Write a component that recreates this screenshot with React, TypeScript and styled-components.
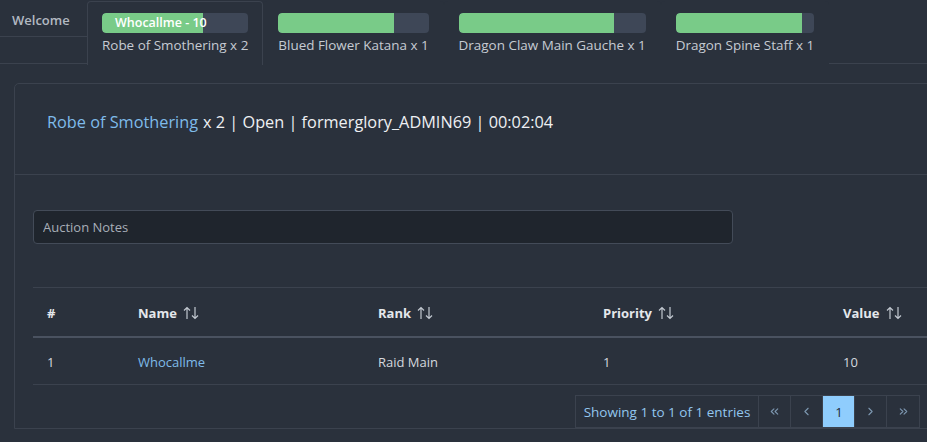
import React from "react";
import styled, { createGlobalStyle } from "styled-components";
import { ChevronsLeft, ChevronLeft, ChevronRight, ChevronsRight } from "lucide-react";

const Global = createGlobalStyle`
  html, body { margin: 0; padding: 0; background: #2a313c; overflow: hidden; }
  body { font-family: "Open Sans", "Noto Sans", sans-serif; color: #dfe3e8; }
  * { box-sizing: border-box; }
`;

const Page = styled.div`
  width: 927px;
  height: 442px;
  overflow: hidden;
  background: #2a313c;
`;

const TabBar = styled.div`
  display: flex;
  align-items: flex-start;
  margin-top: 1px;
  height: 63px;
  border-bottom: 1px solid #3b424e;
  width: 1600px;
`;

const PlainTab = styled.div`
  width: 87px;
  height: 36px;
  padding: 10px 0 0 12px;
  font-size: 13px;
  font-weight: 600;
  color: #b3b9c2;
  border-bottom: 1px solid #3b424e;
`;

const ItemTab = styled.div<{ $active?: boolean }>`
  display: flex;
  flex-direction: column;
  padding: 11px 14px 0;
  border: 1px solid ${(p) => (p.$active ? "#3b424e" : "transparent")};
  border-bottom: none;
  border-radius: 4px 4px 0 0;
  background: #2a313c;
  position: relative;
  z-index: 1;
  margin-bottom: -1px;
  height: 64px;
`;

const Bar = styled.div`
  position: relative;
  height: 20px;
  border-radius: 4px;
  background: #3e4757;
  overflow: hidden;
`;

const Fill = styled.div`
  height: 100%;
  background: #79cb88;
  border-radius: 4px 0 0 4px;
`;

const BarLabel = styled.span`
  position: absolute;
  left: 13px;
  top: 0;
  line-height: 20px;
  font-size: 12.5px;
  font-weight: 600;
  color: #ffffff;
  white-space: nowrap;
`;

const TabLabel = styled.div`
  margin-top: 3px;
  font-size: 13.45px;
  color: #c6cbd3;
  white-space: nowrap;
`;

const Card = styled.div`
  margin: 19px 0 0 14px;
  width: 1467px;
  border: 1px solid #3b424e;
  border-radius: 5px 5px 0 0;
`;

const CardHeader = styled.div`
  height: 91px;
  padding: 25px 32px 0;
  font-size: 16.3px;
  line-height: 26px;
  color: #eef0f3;
  border-bottom: 1px solid #3b424e;
  white-space: nowrap;
`;

const ItemLink = styled.span`
  color: #7fbbea;
  margin-right: 5px;
`;

const CardBody = styled.div`
  padding: 35px 18px 0;
`;

const NotesInput = styled.input`
  display: block;
  width: 700px;
  height: 34px;
  padding: 0 9px;
  background: #1f252d;
  border: 1px solid #434b58;
  border-radius: 4px;
  color: #dfe3e8;
  font-family: inherit;
  font-size: 13px;
  outline: none;
  &::placeholder { color: #a7aeb8; }
`;

const Table = styled.table`
  margin-top: 43px;
  width: 100%;
  border-collapse: collapse;
  font-size: 13px;
  table-layout: fixed;
`;

const Th = styled.th<{ $w?: number }>`
  width: ${(p) => (p.$w ? `${p.$w}px` : "auto")};
  height: 49px;
  padding: 2px 14px 0;
  text-align: left;
  font-weight: 700;
  color: #e4e7eb;
  border-top: 1px solid #3b424e;
  border-bottom: 2px solid #4a5260;
`;

const Td = styled.td<{ $link?: boolean }>`
  height: 48px;
  padding: 2px 14px 0;
  color: ${(p) => (p.$link ? "#7fbbea" : "#d4d8de")};
  border-bottom: 1px solid #3b424e;
`;

const SortIcon = () => (
  <svg width="16" height="14" viewBox="0 0 16 14" style={{ marginLeft: 6, verticalAlign: "-2px" }} fill="none" stroke="#c2c8d0" strokeWidth="1.2">
    <path d="M4 13V1.5M1 4.5L4 1.5L7 4.5" />
    <path d="M12 1V12.5M9 9.5L12 12.5L15 9.5" />
  </svg>
);

const PagerRow = styled.div`
  display: flex;
  justify-content: center;
  margin-top: 10px;
`;

const Pager = styled.div`
  display: flex;
  border: 1px solid #3b424e;
  height: 33px;
`;

const PagerInfo = styled.div`
  padding: 0 8px;
  display: flex;
  align-items: center;
  font-size: 13.5px;
  color: #93c6ee;
  border-right: 1px solid #3b424e;
  white-space: nowrap;
`;

const PageBtn = styled.div<{ $active?: boolean }>`
  width: 32px;
  display: flex;
  align-items: center;
  justify-content: center;
  font-size: 13px;
  color: ${(p) => (p.$active ? "#1c2a3a" : "#7d97b0")};
  background: ${(p) => (p.$active ? "#8fcdfd" : "transparent")};
  border-right: 1px solid #3b424e;
  &:last-child { border-right: none; }
`;

const tabs = [
  { label: "Robe of Smothering x 2", pct: 69, text: "Whocallme - 10", active: true },
  { label: "Blued Flower Katana x 1", pct: 77 },
  { label: "Dragon Claw Main Gauche x 1", pct: 83 },
  { label: "Dragon Spine Staff x 1", pct: 91 },
];

export default function App() {
  return (
    <Page>
      <Global />
      <TabBar>
        <PlainTab>Welcome</PlainTab>
        {tabs.map((t) => (
          <ItemTab key={t.label} $active={t.active}>
            <Bar>
              <Fill style={{ width: `${t.pct}%` }} />
              {t.text && <BarLabel>{t.text}</BarLabel>}
            </Bar>
            <TabLabel>{t.label}</TabLabel>
          </ItemTab>
        ))}
      </TabBar>
      <Card>
        <CardHeader>
          <ItemLink>Robe of Smothering</ItemLink>x 2 | Open | formerglory_ADMIN69 | 00:02:04
        </CardHeader>
        <CardBody>
          <NotesInput placeholder="Auction Notes" />
          <Table>
            <thead>
              <tr>
                <Th $w={91}>#</Th>
                <Th $w={240}>Name<SortIcon /></Th>
                <Th $w={225}>Rank<SortIcon /></Th>
                <Th $w={240}>Priority<SortIcon /></Th>
                <Th>Value<SortIcon /></Th>
              </tr>
            </thead>
            <tbody>
              <tr>
                <Td>1</Td>
                <Td $link>Whocallme</Td>
                <Td>Raid Main</Td>
                <Td>1</Td>
                <Td>10</Td>
              </tr>
            </tbody>
          </Table>
          <PagerRow>
            <Pager>
              <PagerInfo>Showing 1 to 1 of 1 entries</PagerInfo>
              <PageBtn><ChevronsLeft size={13} /></PageBtn>
              <PageBtn><ChevronLeft size={13} /></PageBtn>
              <PageBtn $active>1</PageBtn>
              <PageBtn><ChevronRight size={13} /></PageBtn>
              <PageBtn><ChevronsRight size={13} /></PageBtn>
            </Pager>
          </PagerRow>
        </CardBody>
      </Card>
    </Page>
  );
}
